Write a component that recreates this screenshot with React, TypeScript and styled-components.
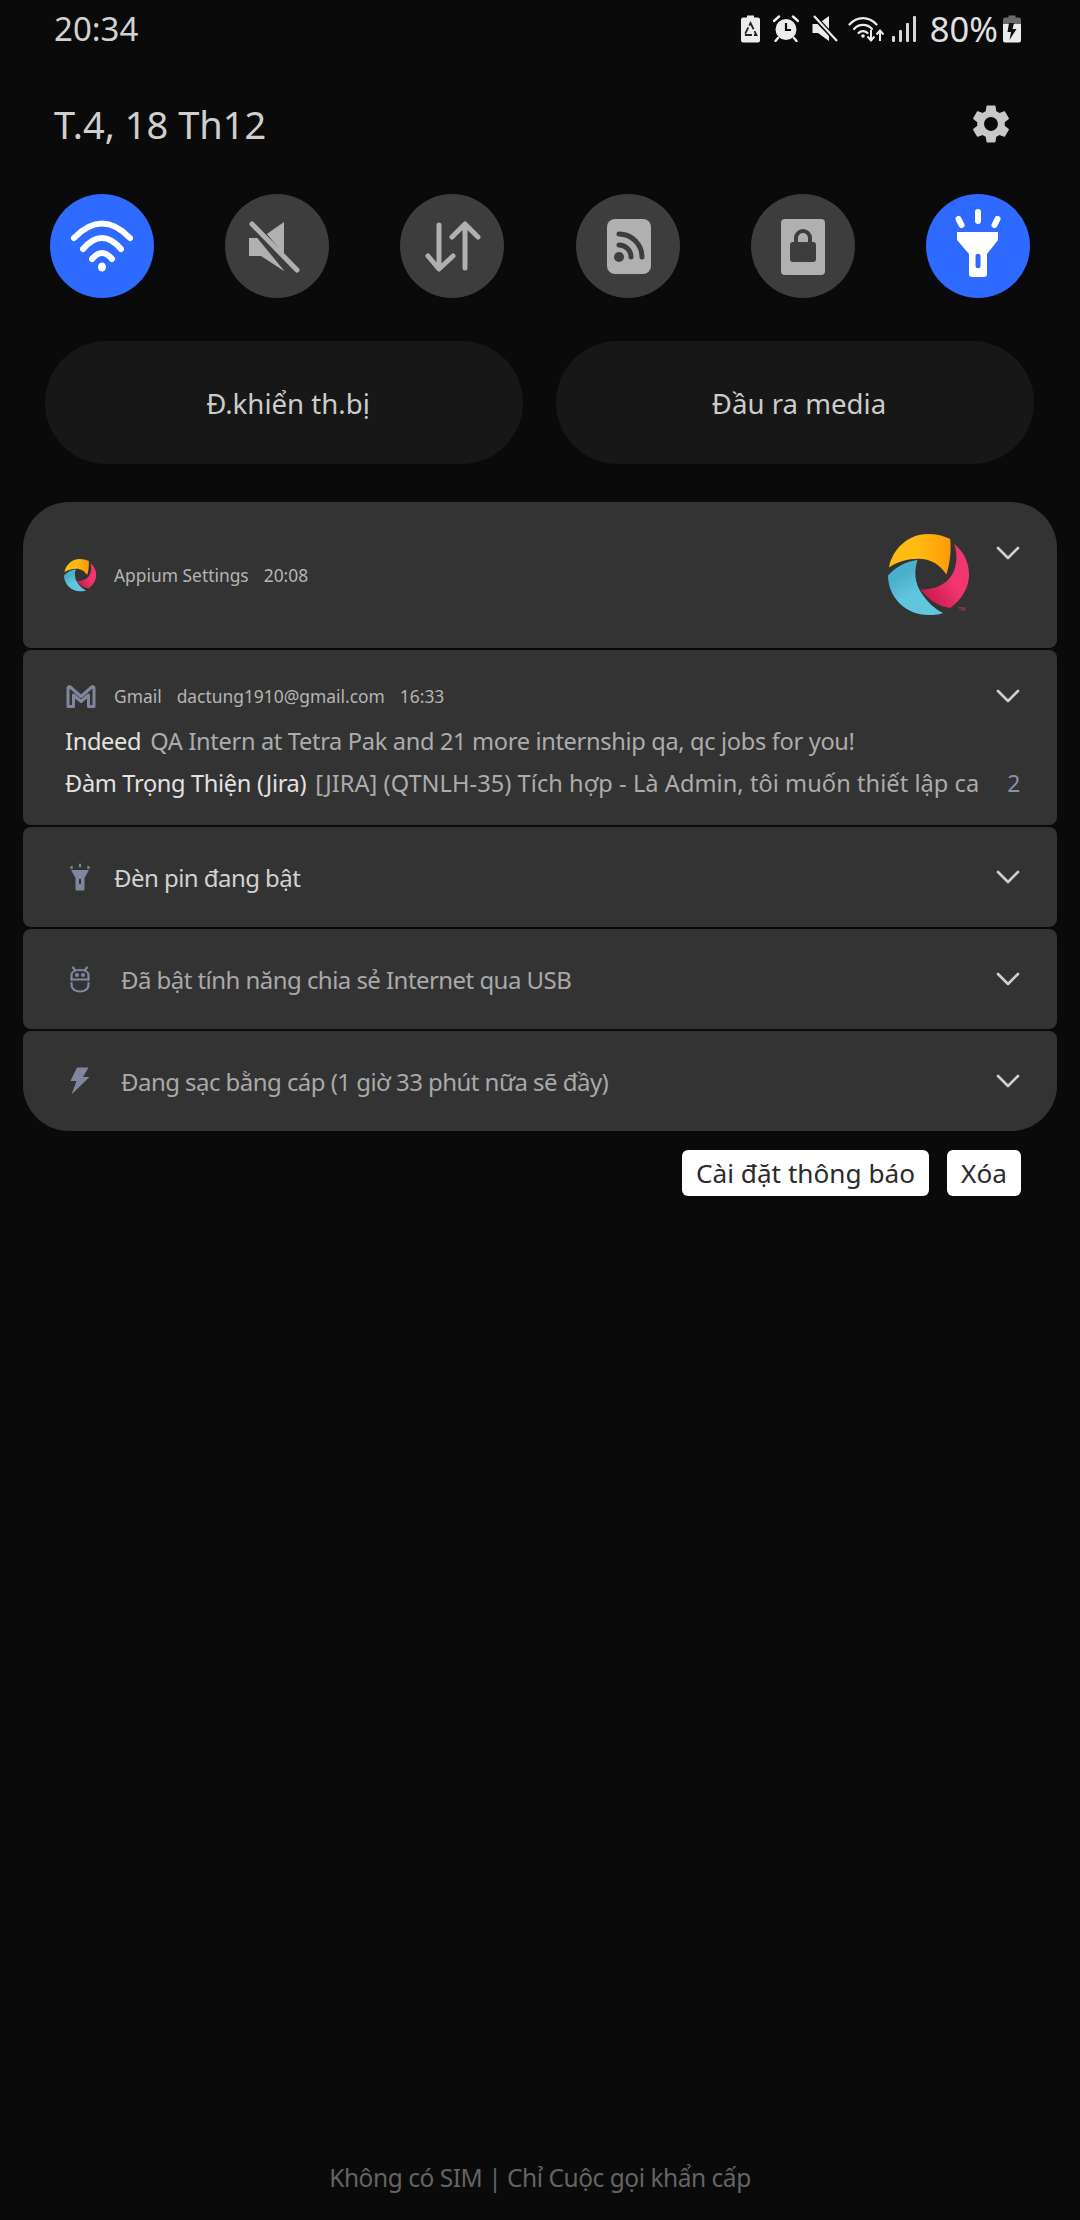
import styled, { createGlobalStyle } from 'styled-components';
import { MdSettings } from 'react-icons/md';

const GlobalStyle = createGlobalStyle`
  html, body {
    margin: 0;
    padding: 0;
    background: #0a0a0a;
  }
  * {
    box-sizing: border-box;
  }
`;

const Page = styled.div`
  width: 1080px;
  height: 2220px;
  display: flex;
  flex-direction: column;
  background: #0a0a0a;
  font-family: 'Noto Sans', 'Open Sans', sans-serif;
  overflow: hidden;
`;

const StatusBar = styled.div`
  height: 57px;
  padding: 0 59px 0 54px;
  display: flex;
  align-items: center;
  justify-content: space-between;
  color: #d2d2d2;
`;

const Clock = styled.span`
  font-size: 33px;
`;

const StatusIcons = styled.div`
  display: flex;
  align-items: center;
  color: #ececec;
`;

const StatusSlot = styled.span<{ $gap: number }>`
  display: flex;
  margin-left: ${(p) => p.$gap}px;
`;

const BatteryText = styled.span`
  font-size: 34.5px;
  margin-left: 14px;
  color: #e0e0e0;
`;

const DateRow = styled.div`
  height: 50px;
  margin-top: 42px;
  padding: 0 66px 0 54px;
  display: flex;
  align-items: center;
  justify-content: space-between;
`;

const DateText = styled.span`
  font-size: 38px;
  color: #cfcfcf;
`;

const TileRow = styled.div`
  margin-top: 45px;
  padding: 0 50px;
  display: flex;
  justify-content: space-between;
`;

const Tile = styled.div<{ $on?: boolean }>`
  width: 104px;
  height: 104px;
  border-radius: 50%;
  background: ${(p) => (p.$on ? '#2e6aff' : '#3d3d3d')};
`;

const ShortcutRow = styled.div`
  margin-top: 43px;
  padding: 0 46px 0 45px;
  display: flex;
  gap: 33px;
`;

const Shortcut = styled.div`
  flex: 1;
  height: 123px;
  padding-left: 8px;
  border-radius: 62px;
  background: #171717;
  color: #cccccc;
  font-size: 27.6px;
  display: flex;
  align-items: center;
  justify-content: center;
`;

const Panel = styled.div`
  margin: 38px 23px 0;
  display: flex;
  flex-direction: column;
  gap: 2px;
`;

const Card = styled.div<{ $first?: boolean; $last?: boolean }>`
  background: #333333;
  border-radius: ${(p) => (p.$first ? 46 : 8)}px ${(p) => (p.$first ? 46 : 8)}px
    ${(p) => (p.$last ? 46 : 8)}px ${(p) => (p.$last ? 46 : 8)}px;
`;

const AppiumCard = styled(Card)`
  height: 146px;
  padding: 32px 37px 0 41px;
  display: flex;
  align-items: flex-start;
`;

const AppiumLabel = styled.div`
  flex: 1;
  margin-top: 25px;
  height: 32px;
  display: flex;
  align-items: center;
`;

const AppiumChevron = styled.div`
  margin: 12px 0 0 25px;
  display: flex;
`;

const GmailCard = styled(Card)`
  height: 175px;
  padding: 31px 37px 0 42px;
`;

const MetaRow = styled.div`
  height: 30px;
  display: flex;
  align-items: center;
`;

const IconBox = styled.div<{ $gap: number }>`
  width: 32px;
  margin-right: ${(p) => p.$gap}px;
  flex-shrink: 0;
  display: flex;
  justify-content: center;
`;

const Meta = styled.span`
  font-size: 17.4px;
  color: #b5b5b5;
  margin-right: 15px;
  white-space: nowrap;
`;

const ChevronEnd = styled.div`
  margin-left: auto;
  display: flex;
`;

const MessageList = styled.div`
  margin-top: 9px;
`;

const Message = styled.div`
  height: 42px;
  display: flex;
  align-items: center;
  font-size: 23.6px;
  letter-spacing: -0.33px;
  white-space: nowrap;
`;

const Sender = styled.span`
  color: #e2e2e2;
  margin-right: 9px;
`;

const Snippet = styled.span<{ $tracking?: number }>`
  color: #acacac;
  flex: 1;
  letter-spacing: ${(p) => p.$tracking ?? -0.33}px;
`;

const Count = styled.span`
  color: #8791aa;
  font-size: 23px;
`;

const SingleCard = styled(Card)`
  height: 100px;
  padding: 0 37px 0 41px;
  display: flex;
  align-items: center;
`;

const SingleText = styled.span<{ $bright?: boolean }>`
  font-size: 24px;
  letter-spacing: -0.55px;
  white-space: nowrap;
  color: ${(p) => (p.$bright ? '#d2d2d2' : '#a9a9a9')};
`;

const Actions = styled.div`
  margin-top: 19px;
  padding-right: 59px;
  display: flex;
  justify-content: flex-end;
  gap: 18px;
`;

const ActionButton = styled.div`
  height: 46px;
  padding: 0 14px;
  background: #ffffff;
  border-radius: 6px;
  color: #2b2b2b;
  font-size: 26.2px;
  display: flex;
  align-items: center;
`;

const Footer = styled.div`
  margin-top: auto;
  padding-bottom: 26px;
  text-align: center;
  font-size: 24.5px;
  letter-spacing: -0.47px;
  color: #646464;
`;

const GREY = '#b0b0b0';
const BADGE = '#7f879c';

function TileIcon({ children }: { children: React.ReactNode }) {
  return (
    <svg width="104" height="104" viewBox="0 0 104 104" fill="none">
      {children}
    </svg>
  );
}

function Chevron() {
  return (
    <svg width="24" height="14" viewBox="0 0 24 14" fill="none">
      <path d="M2 2 L12 12 L22 2" stroke="#d0d0d0" strokeWidth="2.6" strokeLinecap="round" strokeLinejoin="round" />
    </svg>
  );
}

function AppiumLogo({ size, mark }: { size: number; mark?: boolean }) {
  return (
    <svg width={size} height={size} viewBox="0 0 84 84" style={{ flexShrink: 0 }}>
      <defs>
        <linearGradient id="ap-y" x1="0" y1="0" x2="1" y2="0">
          <stop offset="0.45" stopColor="#ffbb12" />
          <stop offset="1" stopColor="#ff9a05" />
        </linearGradient>
        <linearGradient id="ap-p" x1="0.9" y1="0.2" x2="0.1" y2="0.9">
          <stop offset="0.4" stopColor="#f2356f" />
          <stop offset="1" stopColor="#c9184a" />
        </linearGradient>
        <linearGradient id="ap-b" x1="0" y1="0" x2="0.6" y2="1">
          <stop offset="0.3" stopColor="#49afca" />
          <stop offset="0.65" stopColor="#62c5de" />
        </linearGradient>
      </defs>
      <path d="M1 34 C4 16 20 0 40 0 C49 0 57 2 63 5 C64 17 63 29 59 41 C53 31 43 25 31 25 C20 25 9 28 1 34Z" fill="url(#ap-y)" />
      <path d="M67 10 C77 18 82 29 82 41 C82 54 75 66 63 75 C50 73 40 66 33 56 C50 57 62 49 67 37 C70 28 70 19 67 10Z" fill="url(#ap-p)" />
      <path d="M0 42 C8 33 18 28 30 26 C26 37 27 50 34 60 C40 69 47 76 56 80 C50 82 46 82 41 82 C18 82 0 64 0 42Z" fill="url(#ap-b)" />
      {mark && (
        <text x="71" y="78" fontSize="5" fill="#d8305f" fontFamily="'Liberation Sans', sans-serif">
          TM
        </text>
      )}
    </svg>
  );
}

function GmailIcon() {
  return (
    <svg width="30" height="23" viewBox="0 0 30 23" fill="none">
      <path d="M2 21.5 V3 C2 1.8 3.2 1.2 4.2 2 L15 11.5 L25.8 2 C26.8 1.2 28 1.8 28 3 V21.5 H22.5 V10 L15 16.5 L7.5 10 V21.5 Z" stroke={BADGE} strokeWidth="3" strokeLinejoin="round" />
    </svg>
  );
}

function TorchBadge() {
  return (
    <svg width="20" height="28" viewBox="0 0 20 28">
      <circle cx="1.6" cy="4.5" r="1.4" fill={BADGE} />
      <circle cx="18.4" cy="4.5" r="1.4" fill={BADGE} />
      <rect x="9" y="0.5" width="2" height="4" rx="1" fill={BADGE} />
      <path fillRule="evenodd" d="M1 7 H19 L14.5 15 V26 C14.5 27 14 27.5 13 27.5 H7 C6 27.5 5.5 27 5.5 26 V15 Z M9 16 V21 H11 V16 Z" fill={BADGE} />
    </svg>
  );
}

function UsbBadge() {
  return (
    <svg width="20" height="27" viewBox="0 0 20 27" fill="none" stroke={BADGE} strokeWidth="2.2" strokeLinecap="round">
      <path d="M1.5 14 V9 C1.5 6 5 4 10 4 C15 4 18.5 6 18.5 9 V14" />
      <path d="M1.5 13.5 H18.5" />
      <path d="M1.5 17 V18 C1.5 23 5 25.5 10 25.5 C15 25.5 18.5 23 18.5 18 V17" />
      <path d="M3 1.5 L5 4 M17 1.5 L15 4" />
      <circle cx="7" cy="9" r="0.9" fill={BADGE} />
      <circle cx="13" cy="9" r="0.9" fill={BADGE} />
    </svg>
  );
}

function BoltBadge() {
  return (
    <svg width="20" height="28" viewBox="0 0 20 28">
      <path d="M7 0.5 H18.5 L13 10 H19.5 L1.5 27.5 L6.5 14 H0.5 Z" fill={BADGE} />
    </svg>
  );
}

function RecycleBattery() {
  return (
    <svg width="19" height="28" viewBox="0 0 19 28" style={{ display: 'block' }}>
      <path d="M6 0.5 H13 V2.5 H17 C18 2.5 19 3.5 19 4.5 V25.5 C19 26.5 18 27.5 17 27.5 H2 C1 27.5 0 26.5 0 25.5 V4.5 C0 3.5 1 2.5 2 2.5 H6 Z" fill="#ececec" />
      <path d="M9.5 8 L15.5 20 H3.5 Z" fill="none" stroke="#222" strokeWidth="1.8" strokeDasharray="7 2" />
    </svg>
  );
}

function AlarmIcon() {
  return (
    <svg width="26" height="27" viewBox="0 0 26 27" style={{ display: 'block' }}>
      <circle cx="13" cy="14.5" r="10.5" fill="#ececec" />
      <path d="M13 8 V15 H18" fill="none" stroke="#0a0a0a" strokeWidth="2.2" />
      <path d="M1 6 L6 1.5 M25 6 L20 1.5 M5 23 L2.5 26 M21 23 L23.5 26" stroke="#ececec" strokeWidth="2.4" strokeLinecap="round" />
    </svg>
  );
}

function MuteIcon() {
  return (
    <svg width="26" height="27" viewBox="0 0 26 27" style={{ display: 'block' }}>
      <path d="M0.5 9 H6 L17 1 V26 L6 18 H0.5 Z" fill="#ececec" />
      <path d="M2 1.5 L25 26" stroke="#0a0a0a" strokeWidth="5" />
      <path d="M2 1 L25 26" stroke="#ececec" strokeWidth="2.2" />
    </svg>
  );
}

function WifiArrowsIcon() {
  return (
    <svg width="36" height="27" viewBox="0 0 36 27" fill="none" stroke="#ececec" style={{ display: 'block' }}>
      <path d="M1.5 9.5 C9 1 21 1 28.5 9.5" strokeWidth="2.2" strokeLinecap="round" />
      <path d="M6 14 C11 8.5 19 8.5 24 14" strokeWidth="2.2" strokeLinecap="round" />
      <path d="M10.5 18 C13 15.5 17 15.5 19.5 18" strokeWidth="2.2" strokeLinecap="round" />
      <circle cx="15" cy="21" r="1.8" fill="#ececec" stroke="none" />
      <path d="M23 15 V25 M19.5 21.5 L23 25.5 L26.5 21.5" strokeWidth="2" />
      <path d="M32 26 V16 M28.5 19.5 L32 15.5 L35.5 19.5" strokeWidth="2" />
    </svg>
  );
}

function SignalIcon() {
  return (
    <svg width="24" height="26" viewBox="0 0 24 26" fill="#d8d8d8" style={{ display: 'block' }}>
      <rect x="0" y="20" width="3" height="6" rx="1" />
      <rect x="7" y="14" width="3" height="12" rx="1" />
      <rect x="14" y="7" width="3" height="19" rx="1" />
      <rect x="21" y="0" width="3" height="26" rx="1" />
    </svg>
  );
}

function ChargingBattery() {
  return (
    <svg width="18" height="28" viewBox="0 0 18 28" style={{ display: 'block' }}>
      <path d="M5.5 0.5 H12.5 V2.5 H16 C17 2.5 18 3.5 18 4.5 V9 H0 V4.5 C0 3.5 1 2.5 2 2.5 H5.5 Z" fill="#6a6a6a" />
      <path d="M0 9 H18 V25.5 C18 26.5 17 27.5 16 27.5 H2 C1 27.5 0 26.5 0 25.5 Z" fill="#ececec" />
      <path d="M11 8 H6 L4.5 17 H8 L6.5 25 L13.5 14 H9.5 Z" fill="#111" />
    </svg>
  );
}

export default function App() {
  return (
    <>
      <GlobalStyle />
      <Page>
        <StatusBar>
          <Clock>20:34</Clock>
          <StatusIcons>
            <StatusSlot $gap={0}><RecycleBattery /></StatusSlot>
            <StatusSlot $gap={13}><AlarmIcon /></StatusSlot>
            <StatusSlot $gap={13}><MuteIcon /></StatusSlot>
            <StatusSlot $gap={10}><WifiArrowsIcon /></StatusSlot>
            <StatusSlot $gap={8}><SignalIcon /></StatusSlot>
            <BatteryText>80%</BatteryText>
            <StatusSlot $gap={5}><ChargingBattery /></StatusSlot>
          </StatusIcons>
        </StatusBar>

        <DateRow>
          <DateText>T.4, 18 Th12</DateText>
          <MdSettings size={46} color="#c8c8c8" />
        </DateRow>

        <TileRow>
          <Tile $on>
            <TileIcon>
              <g stroke="#fff" strokeWidth="6" strokeLinecap="round">
                <path d="M24 44 Q52 15 80 44" />
                <path d="M33 55 Q52 33 71 55" />
                <path d="M42 65 Q52 53 62 65" />
              </g>
              <ellipse cx="52" cy="73" rx="4" ry="4.5" fill="#fff" />
            </TileIcon>
          </Tile>
          <Tile>
            <TileIcon>
              <path d="M24 44 H36 L59 28 V77 L36 62 H24 Z" fill={GREY} />
              <path d="M24 26 L70 82" stroke="#3d3d3d" strokeWidth="10" />
              <path d="M27 30 L72 76" stroke={GREY} strokeWidth="5" strokeLinecap="round" />
            </TileIcon>
          </Tile>
          <Tile>
            <TileIcon>
              <g stroke={GREY} strokeWidth="5" strokeLinecap="round" strokeLinejoin="round">
                <path d="M39 31 V74 M28 62 L39 75 L53 62" />
                <path d="M65 74 V31 M52 43 L65 30 L78 43" />
              </g>
            </TileIcon>
          </Tile>
          <Tile>
            <TileIcon>
              <rect x="31" y="25" width="44" height="55" rx="8" fill={GREY} />
              <circle cx="43" cy="63" r="5" fill="#3d3d3d" />
              <path d="M43 51 A12 12 0 0 1 55 63" stroke="#3d3d3d" strokeWidth="5" strokeLinecap="round" />
              <path d="M43 40 A23 23 0 0 1 66 63" stroke="#3d3d3d" strokeWidth="5" strokeLinecap="round" />
            </TileIcon>
          </Tile>
          <Tile>
            <TileIcon>
              <rect x="30" y="25" width="44" height="56" rx="4" fill={GREY} />
              <rect x="39" y="48" width="26" height="20" rx="3" fill="#3d3d3d" />
              <path d="M45 50 V44 A7 7 0 0 1 59 44 V50" stroke="#3d3d3d" strokeWidth="4" />
            </TileIcon>
          </Tile>
          <Tile $on>
            <TileIcon>
              <g stroke="#fff" strokeWidth="6" strokeLinecap="round">
                <path d="M52 18 V27" />
                <path d="M32.5 25 L35.5 31" />
                <path d="M71.5 25 L68.5 31" />
              </g>
              <path fillRule="evenodd" d="M31 38 H72 V46 L61 60 V80 C61 82 60 83 58 83 H46 C44 83 43 82 43 80 V60 L31 46 Z M49.5 62 V72 C49.5 75 54.5 75 54.5 72 V62 C54.5 59 49.5 59 49.5 62 Z" fill="#fff" />
            </TileIcon>
          </Tile>
        </TileRow>

        <ShortcutRow>
          <Shortcut>Đ.khiển th.bị</Shortcut>
          <Shortcut>Đầu ra media</Shortcut>
        </ShortcutRow>

        <Panel>
          <AppiumCard $first>
            <AppiumLabel>
              <IconBox $gap={18}><AppiumLogo size={33} /></IconBox>
              <Meta>Appium Settings</Meta>
              <Meta>20:08</Meta>
            </AppiumLabel>
            <AppiumLogo size={83} mark />
            <AppiumChevron><Chevron /></AppiumChevron>
          </AppiumCard>

          <GmailCard>
            <MetaRow>
              <IconBox $gap={17}><GmailIcon /></IconBox>
              <Meta>Gmail</Meta>
              <Meta>dactung1910@gmail.com</Meta>
              <Meta>16:33</Meta>
              <ChevronEnd><Chevron /></ChevronEnd>
            </MetaRow>
            <MessageList>
              <Message>
                <Sender>Indeed</Sender>
                <Snippet>QA Intern at Tetra Pak and 21 more internship qa, qc jobs for you!</Snippet>
              </Message>
              <Message>
                <Sender>Đàm Trọng Thiện (Jira)</Sender>
                <Snippet $tracking={0.05}>[JIRA] (QTNLH-35) Tích hợp - Là Admin, tôi muốn thiết lập ca</Snippet>
                <Count>2</Count>
              </Message>
            </MessageList>
          </GmailCard>

          <SingleCard>
            <IconBox $gap={18}><TorchBadge /></IconBox>
            <SingleText $bright>Đèn pin đang bật</SingleText>
            <ChevronEnd><Chevron /></ChevronEnd>
          </SingleCard>

          <SingleCard>
            <IconBox $gap={25}><UsbBadge /></IconBox>
            <SingleText>Đã bật tính năng chia sẻ Internet qua USB</SingleText>
            <ChevronEnd><Chevron /></ChevronEnd>
          </SingleCard>

          <SingleCard $last>
            <IconBox $gap={25}><BoltBadge /></IconBox>
            <SingleText>Đang sạc bằng cáp (1 giờ 33 phút nữa sẽ đầy)</SingleText>
            <ChevronEnd><Chevron /></ChevronEnd>
          </SingleCard>
        </Panel>

        <Actions>
          <ActionButton>Cài đặt thông báo</ActionButton>
          <ActionButton>Xóa</ActionButton>
        </Actions>

        <Footer>Không có SIM | Chỉ Cuộc gọi khẩn cấp</Footer>
      </Page>
    </>
  );
}
